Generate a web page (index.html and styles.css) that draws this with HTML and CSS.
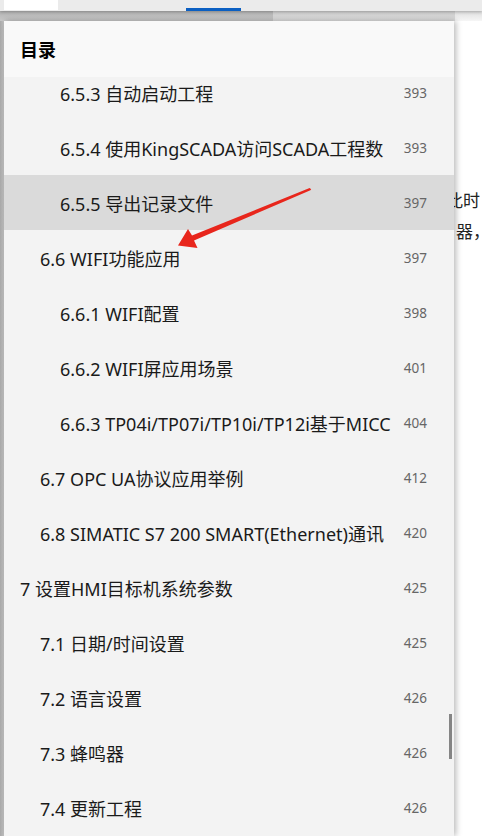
FILE: index.html
```html
<!DOCTYPE html>
<html lang="zh-CN">
<head>
<meta charset="utf-8">
<title>目录</title>
<link rel="stylesheet" href="styles.css">
</head>
<body>
<div class="topbar">
  <div class="tab-white"></div>
  <div class="tab-active"></div>
</div>
<div class="strip">
  <div class="strip-left"></div>
  <div class="strip-mid"></div>
  <div class="strip-right"></div>
</div>
<div class="main">
  <div class="doc">
    <div class="doc-line l1">此时</div>
    <div class="doc-line l2">器，</div>
  </div>
  <aside class="toc">
    <div class="toc-head">目录</div>
    <div class="toc-list">
      <div class="toc-inner">
        <div class="row lv3"><span class="t">6.5.3 自动启动工程</span><span class="p">393</span></div>
        <div class="row lv3"><span class="t">6.5.4 使用KingSCADA访问SCADA工程数</span><span class="p">393</span></div>
        <div class="row lv3 sel"><span class="t">6.5.5 导出记录文件</span><span class="p">397</span></div>
        <div class="row lv2"><span class="t">6.6 WIFI功能应用</span><span class="p">397</span></div>
        <div class="row lv3"><span class="t">6.6.1 WIFI配置</span><span class="p">398</span></div>
        <div class="row lv3"><span class="t">6.6.2 WIFI屏应用场景</span><span class="p">401</span></div>
        <div class="row lv3"><span class="t">6.6.3 TP04i/TP07i/TP10i/TP12i基于MICC</span><span class="p">404</span></div>
        <div class="row lv2"><span class="t">6.7 OPC UA协议应用举例</span><span class="p">412</span></div>
        <div class="row lv2"><span class="t">6.8 SIMATIC S7 200 SMART(Ethernet)通讯</span><span class="p">420</span></div>
        <div class="row lv1"><span class="t">7 设置HMI目标机系统参数</span><span class="p">425</span></div>
        <div class="row lv2"><span class="t">7.1 日期/时间设置</span><span class="p">425</span></div>
        <div class="row lv2"><span class="t">7.2 语言设置</span><span class="p">426</span></div>
        <div class="row lv2"><span class="t">7.3 蜂鸣器</span><span class="p">426</span></div>
        <div class="row lv2"><span class="t">7.4 更新工程</span><span class="p">426</span></div>
      </div>
      <div class="scrollbar"></div>
    </div>
  </aside>
</div>
<svg class="arrow" width="482" height="836" viewBox="0 0 482 836" aria-hidden="true">
  <polygon fill="#e8261c" points="178,245.5 188,229 192,235.6 309.6,188 311.2,189.2 310.4,190.2 194,240.4 197.5,248"/>
</svg>
</body>
</html>
```

FILE: styles.css
```css
html, body {
  margin: 0;
  padding: 0;
}
body {
  width: 482px;
  height: 836px;
  overflow: hidden;
  position: relative;
  background: #ffffff;
  font-family: "Noto Sans", "Noto Sans CJK SC", sans-serif;
}
.topbar {
  height: 11px;
  background: #ebebeb;
  display: flex;
  position: relative;
  z-index: 2;
  box-shadow: 0 1px 3px rgba(0,0,0,0.25);
}
.tab-white {
  margin-left: 4px;
  width: 54px;
  height: 10px;
  background: #ffffff;
}
.tab-active {
  margin-left: 128px;
  width: 55px;
  height: 3px;
  align-self: flex-end;
  background: #0b5fc2;
}
.strip {
  height: 10px;
  display: flex;
}
.strip-left {
  width: 273px;
  background: linear-gradient(#b3b3b3, #c8c8c8);
}
.strip-mid {
  width: 182px;
  background: linear-gradient(#cdcdcd, #dcdcdc);
}
.strip-right {
  flex: 1;
  background: linear-gradient(#dedede, #f6f6f6);
}
.main {
  position: relative;
  height: 815px;
  background: linear-gradient(90deg, #a9a9a9 0, #c4c4c4 4px, #ffffff 4px);
}
.doc {
  padding-top: 163px;
  font-family: "Noto Sans CJK SC", serif;
  font-size: 17px;
  color: #222;
  white-space: nowrap;
  line-height: 31px;
}
.doc-line.l1 { margin-left: 446px; }
.doc-line.l2 { margin-left: 456px; }
.toc {
  position: absolute;
  left: 4px;
  top: 0;
  bottom: 0;
  width: 450px;
  background: #f3f3f3;
  box-shadow: 2px 0 6px rgba(0,0,0,0.28);
  display: flex;
  flex-direction: column;
}
.toc-head {
  height: 56px;
  flex: none;
  display: flex;
  align-items: center;
  padding-left: 16px;
  background: #f9f9f9;
  font-size: 18px;
  font-weight: bold;
  color: #000;
}
.toc-list {
  flex: 1;
  overflow: hidden;
  position: relative;
}
.toc-inner {
  margin-top: -12px;
}
.row {
  height: 55px;
  display: flex;
  align-items: center;
  font-size: 18px;
  color: #1a1a1a;
}
.row.sel {
  background: #dadada;
}
.row .t {
  flex: 1;
  min-width: 0;
  white-space: nowrap;
  overflow: hidden;
}
.row .p {
  width: 26px;
  margin-left: 10px;
  margin-right: 27px;
  text-align: right;
  font-size: 13.5px;
  color: #666;
}
.lv1 .t { padding-left: 16px; }
.lv2 .t { padding-left: 36px; }
.lv3 .t { padding-left: 56px; }
.scrollbar {
  position: absolute;
  right: 2px;
  top: 637px;
  width: 3px;
  height: 45px;
  background: #858585;
}
.arrow {
  position: absolute;
  left: 0;
  top: 0;
  pointer-events: none;
}
```
